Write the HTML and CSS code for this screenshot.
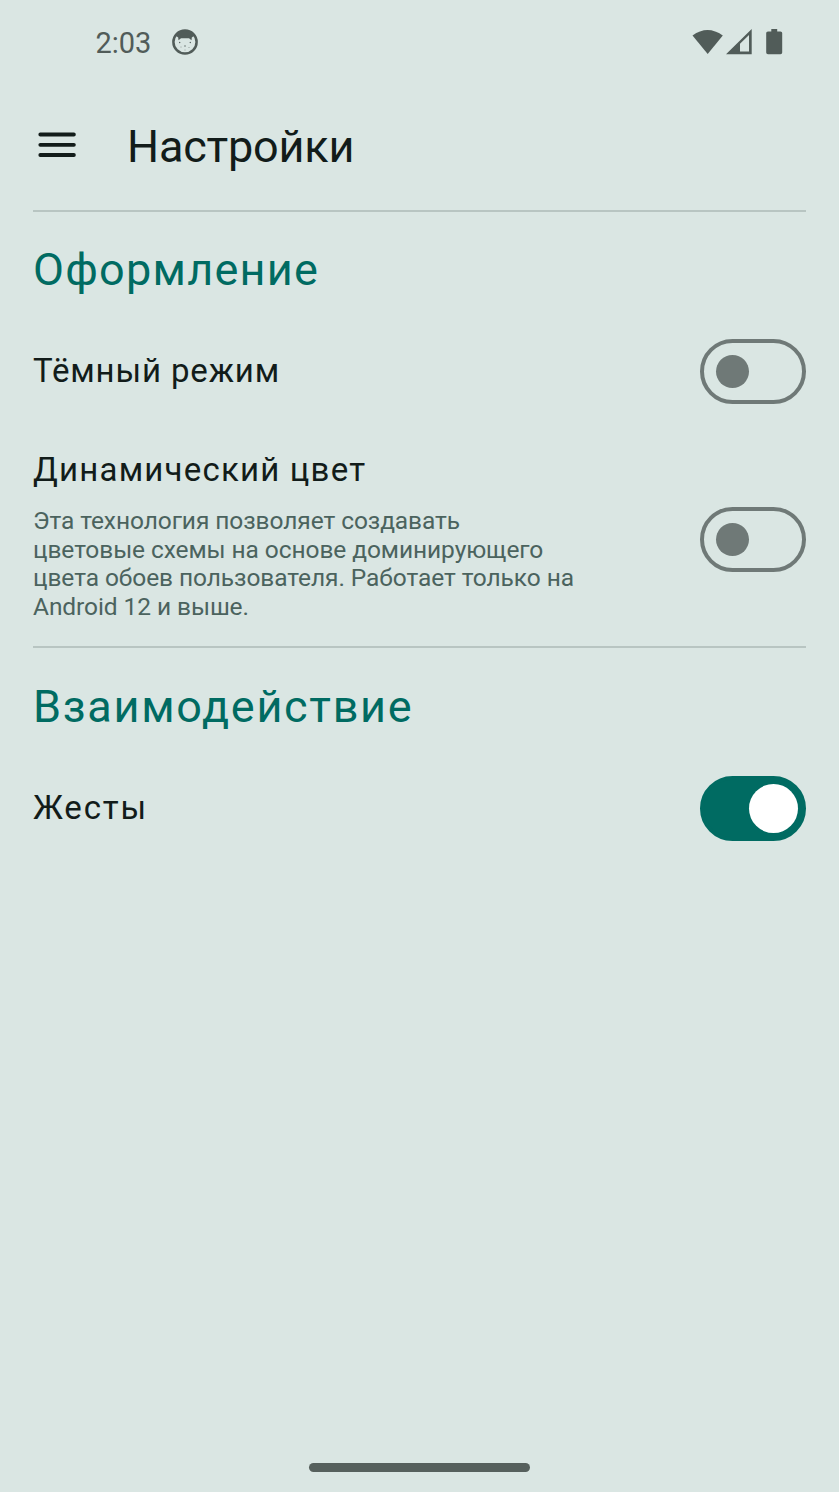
FILE: index.html
```html
<!DOCTYPE html>
<html lang="ru">
<head>
<meta charset="utf-8">
<title>Настройки</title>
<link rel="stylesheet" href="styles.css">
</head>
<body>
<div class="screen">
  <div class="status">
    <span class="clock">2:03</span>
    <svg class="face" width="28" height="28" viewBox="0 0 28 28">
      <circle cx="14" cy="14" r="11.6" fill="none" stroke="#515c59" stroke-width="2.5"/>
      <path d="M4.500 7.500C8 1.500 20 1.500 23.500 7.500L20.800 9.500 20.500 12.300 18 10.200H10L7.500 12.300 7.200 9.500Z" fill="#515c59"/>
      <g fill="#515c59"><circle cx="8.700" cy="14.500" r=".7"/><circle cx="19.300" cy="14.500" r=".7"/><circle cx="14" cy="18" r=".7"/><circle cx="10" cy="19" r=".45"/><circle cx="18" cy="19.500" r=".45"/><circle cx="14" cy="22" r=".45"/></g>
    </svg>
    <svg class="signals" width="92" height="30" viewBox="0 0 92 30" fill="#515c59">
      <path d="M.5 6.500Q15.500-4.500 30.800 6.500L15.700 25Z"/>
      <path fill-rule="evenodd" d="M34 25.200L59.700 0V25.200ZM48 14.700V22.600H57V6Z"/>
      <path d="M79.300 0H85.200V2.400H88.500Q90.200 2.400 90.200 4V23.500Q90.200 25.200 88.500 25.200H76Q74.200 25.200 74.200 23.500V4Q74.200 2.400 76 2.400H79.300Z"/>
    </svg>
  </div>
  <header class="bar">
    <svg width="38" height="26" viewBox="0 0 38 26" stroke="#121c1a" stroke-width="3.8" stroke-linecap="round">
      <path d="M2.300 2.500H35.900M2.300 12.800H35.900M2.300 23H35.900"/>
    </svg>
    <h1 class="title">Настройки</h1>
  </header>
  <main class="content">
    <section class="group">
      <h2 class="heading look">Оформление</h2>
      <div class="row">
        <span class="label dark">Тёмный режим</span>
        <span class="switch"><span class="thumb"></span></span>
      </div>
      <div class="row tall">
        <div class="text">
          <div class="label color">Динамический цвет</div>
          <p class="hint">Эта технология позволяет создавать<br>цветовые схемы на основе доминирующего<br>цвета обоев пользователя. Работает только на<br>Android 12 и выше.</p>
        </div>
        <span class="switch"><span class="thumb"></span></span>
      </div>
    </section>
    <section class="group">
      <h2 class="heading action">Взаимодействие</h2>
      <div class="row">
        <span class="label gestures">Жесты</span>
        <span class="switch on"><span class="thumb"></span></span>
      </div>
    </section>
  </main>
  <div class="home"></div>
</div>
</body>
</html>
```
FILE: styles.css
```css
* { box-sizing: border-box; }
body { margin: 0; background: #dae6e3; font-family: Roboto, "Noto Sans", sans-serif; color: #121c1a; }
.screen { height: 1492px; display: flex; flex-direction: column; }
.status { height: 84px; display: flex; align-items: center; padding: 0 55px 0 95.5px; color: #515c59; }
.clock { font-size: 29px; width: 75.5px; line-height: 34px; padding-top: 1px; white-space: nowrap; }
.signals { margin-left: auto; margin-top: 4px; }
.bar { height: 126px; display: flex; align-items: center; padding: 0 38px 1px; gap: 51px; }
.bar svg { margin-bottom: 4px; }
.title { margin: 0; font-size: 45px; font-weight: 400; line-height: 56px; letter-spacing: -.2px; white-space: nowrap; }
.content { padding: 0 33px; flex: 1; }
.group { border-top: 2px solid #b8c5c2; }
.heading { margin: 0; height: 95px; font-size: 45px; line-height: 56px; font-weight: 400; color: #006b62; white-space: nowrap; }
.look { padding-top: 30px; letter-spacing: 1.25px; }
.action { padding-top: 31px; height: 96px; letter-spacing: 1.7px; }
.row { height: 129px; display: flex; align-items: center; justify-content: space-between; }
.label { font-size: 33px; line-height: 40px; white-space: nowrap; }
.dark { letter-spacing: .85px; padding-bottom: 2px; }
.color { letter-spacing: 1.2px; }
.gestures { letter-spacing: 1.8px; padding-bottom: 2px; }
.tall { height: 210px; align-items: flex-start; padding-top: 14px; }
.tall .switch { margin-top: 57px; }
.hint { margin: 17px 0 0; font-size: 24.5px; line-height: 28.6px; letter-spacing: -.08px; color: #4b635e; white-space: nowrap; }
.switch { width: 106px; height: 65px; border-radius: 33px; border: 4px solid #6f7977; display: flex; align-items: center; padding: 0 12px; flex: none; }
.thumb { width: 33px; height: 33px; border-radius: 50%; background: #6f7977; }
.on { background: #006b62; border-color: #006b62; justify-content: flex-end; padding: 0 4px; }
.on .thumb { width: 49px; height: 49px; background: #fff; }
.home { width: 221px; height: 9px; border-radius: 5px; background: #56605d; margin: 0 auto 20px; }
```
